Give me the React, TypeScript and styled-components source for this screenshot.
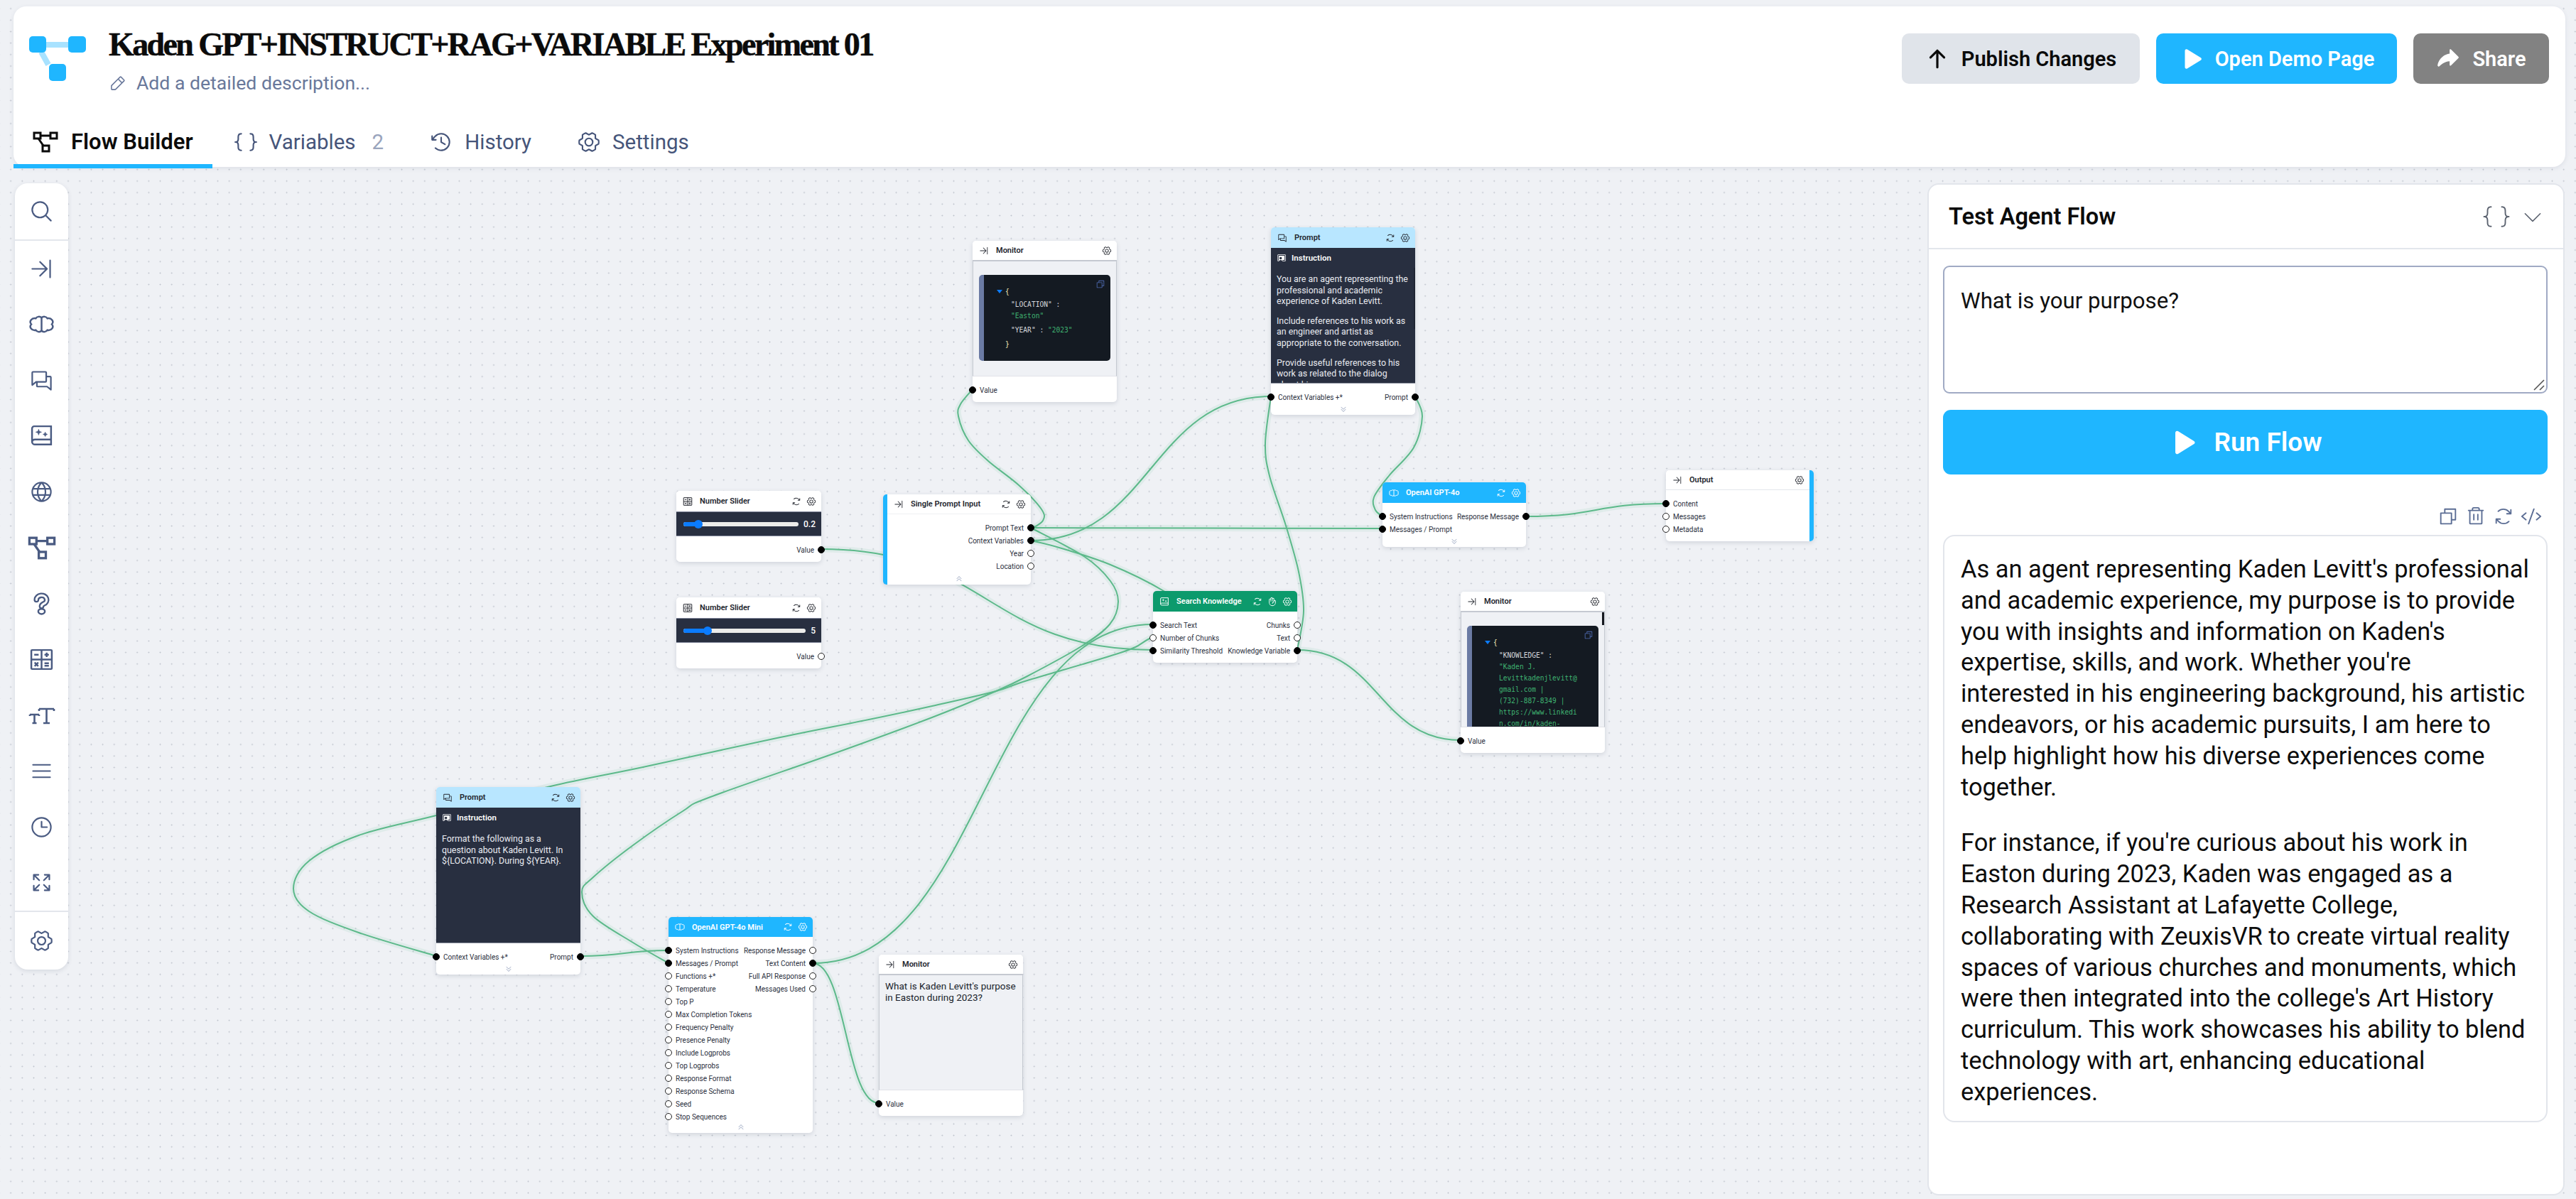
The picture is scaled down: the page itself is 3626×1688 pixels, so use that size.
import React from "react";
import styled, { createGlobalStyle } from "styled-components";
import {
  PiMagnifyingGlass, PiArrowLineRight, PiChats, PiGlobe, PiList, PiClock,
  PiArrowsOut, PiGearSix, PiArrowsClockwise, PiCopy, PiTrash, PiCode, PiBracketsCurly, PiBracketsCurlyLight,
  PiClockCounterClockwise, PiPencilSimple, PiCaretDownLight, PiCaretDoubleDown, PiCaretDoubleUp, PiPlayFill,
  PiShareFatFill, PiArrowUpBold, PiChalkboardTeacherFill, PiHandPalm,
} from "react-icons/pi";

const SANS = `Roboto, "Liberation Sans", sans-serif`;
const BLUE = "#1fb6ff";
const OX = 96;
const OY = 258;

const GlobalStyle = createGlobalStyle`
  html, body { margin: 0; padding: 0; }
  body {
    width: 3626px;
    height: 1688px;
    overflow: hidden;
    font-family: ${SANS};
    background-color: #eff1f5;
    background-image: radial-gradient(circle, #bcc1ca 0.8px, transparent 1.1px);
    background-size: 16.19px 16.19px;
    background-position: 7px 4px;
  }
`;

const Page = styled.div`
  display: flex;
  flex-direction: column;
  height: 1688px;
`;

const Header = styled.header`
  margin: 9px 15px 0 19px;
  height: 226px;
  background: #fff;
  border-radius: 18px;
  box-shadow: 0 2px 6px rgba(60, 70, 100, 0.1);
  display: flex;
  flex-direction: column;
`;

const HeaderTop = styled.div`
  flex: 1;
  display: flex;
  padding: 27px 23px 0 22px;
`;

const LogoMark = styled.svg`
  width: 80px;
  height: 63px;
  margin-top: 15px;
`;

const TitleBlock = styled.div`
  margin-left: 32px;
  flex: 1;
`;

const Title = styled.h1`
  margin: 0;
  font-family: "Liberation Serif", serif;
  font-size: 46px;
  line-height: 54px;
  font-weight: 700;
  letter-spacing: -2.62px;
  -webkit-text-stroke: 0.5px #0b0b0b;
  color: #0b0b0b;
`;

const Description = styled.div`
  margin-top: 10px;
  display: flex;
  align-items: center;
  gap: 14px;
  font-size: 26.6px;
  line-height: 34px;
  color: #69789b;
  svg { font-size: 25px; }
`;

const Actions = styled.div`
  display: flex;
  gap: 23px;
  margin-top: 11px;
`;

const ActionButton = styled.button<{ $bg: string; $fg: string; $w: number }>`
  width: ${(p) => p.$w}px;
  height: 71px;
  border: 0;
  border-radius: 10px;
  background: ${(p) => p.$bg};
  color: ${(p) => p.$fg};
  font-family: ${SANS};
  font-size: 29px;
  font-weight: 600;
  display: flex;
  align-items: center;
  justify-content: center;
  gap: 17px;
  svg { font-size: 34px; }
`;

const TabBar = styled.nav`
  display: flex;
  height: 64px;
  margin-bottom: -2px;
`;

const Tab = styled.div<{ $active?: boolean }>`
  display: flex;
  align-items: center;
  gap: ${(p) => (p.$active ? 18 : 16)}px;
  padding: 0 ${(p) => (p.$active ? "27px" : "34px")} 5px ${(p) => (p.$active ? "27px" : "30px")};
  font-size: ${(p) => (p.$active ? 31 : 29.5)}px;
  font-weight: ${(p) => (p.$active ? 600 : 400)};
  color: ${(p) => (p.$active ? "#0b0b0b" : "#46557a")};
  border-bottom: 6px solid ${(p) => (p.$active ? BLUE : "transparent")};
  svg { font-size: 34px; flex: none; }
`;

const TabCount = styled.span`
  margin-left: 7px;
  color: #9aa5bd;
`;

const Workspace = styled.main`
  flex: 1;
  display: flex;
  min-height: 0;
  padding: 23px 16px 5px 21px;
`;

const Sidebar = styled.aside`
  width: 75px;
  height: 1107px;
  background: #fff;
  border-radius: 18px;
  box-shadow: 0 2px 6px rgba(60, 70, 100, 0.14);
  display: flex;
  flex-direction: column;
  color: #4a5b82;
`;

const SideGroup = styled.div<{ $h: number; $line?: boolean }>`
  height: ${(p) => p.$h}px;
  display: flex;
  flex-direction: column;
  border-bottom: ${(p) => (p.$line ? "2px solid #e3e6ec" : "0")};
`;

const SideIcon = styled.div`
  flex: 1;
  display: flex;
  align-items: center;
  justify-content: center;
  font-size: 35px;
`;

const Canvas = styled.section`
  flex: 1;
  position: relative;
  min-width: 0;
`;

const EdgeLayer = styled.svg`
  position: absolute;
  left: 0;
  top: 0;
  width: 2617px;
  height: 1430px;
  overflow: visible;
`;

const EdgeHalo = styled.path`
  fill: none;
  stroke: rgba(88, 184, 136, 0.1);
  stroke-width: 9;
`;

const EdgeLine = styled.path`
  fill: none;
  stroke: #5cb98a;
  stroke-width: 2;
`;

const NodeCard = styled.div<{ $x: number; $y: number; $w: number; $h: number; $side?: "left" | "right" }>`
  position: absolute;
  left: ${(p) => p.$x - OX}px;
  top: ${(p) => p.$y - OY}px;
  width: ${(p) => p.$w}px;
  height: ${(p) => p.$h}px;
  box-sizing: border-box;
  background: #fff;
  border-radius: 5px;
  box-shadow: 0 2px 6px rgba(50, 60, 90, 0.16);
  display: flex;
  flex-direction: column;
  border-left: ${(p) => (p.$side === "left" ? `6px solid ${BLUE}` : "0")};
  border-right: ${(p) => (p.$side === "right" ? `6px solid ${BLUE}` : "0")};
`;

const NodeHead = styled.div<{ $bg?: string; $fg?: string; $h?: number; $line?: string }>`
  flex: none;
  height: ${(p) => p.$h ?? 29}px;
  box-sizing: border-box;
  display: flex;
  align-items: center;
  gap: 7px;
  padding: 0 7px 0 9px;
  background: ${(p) => p.$bg ?? "#fff"};
  color: ${(p) => p.$fg ?? "#23262e"};
  border-radius: 5px 5px 0 0;
  border-bottom: ${(p) => (p.$line ? `1px solid ${p.$line}` : "0")};
  font-size: 11px;
  font-weight: 600;
  svg { font-size: 14px; flex: none; }
`;

const HeadTitle = styled.span`
  flex: 1;
  margin-left: 3px;
  white-space: nowrap;
`;

const NodeRows = styled.div`
  padding-top: 10px;
`;

const Row = styled.div`
  position: relative;
  height: 18px;
  padding: 0 10px;
  display: flex;
  align-items: center;
  justify-content: space-between;
  font-size: 10px;
  color: #2b3040;
  white-space: nowrap;
`;

const Handle = styled.i<{ $side: "left" | "right"; $on?: boolean }>`
  position: absolute;
  top: 50%;
  ${(p) => p.$side}: -5px;
  width: 10px;
  height: 10px;
  margin-top: -5px;
  box-sizing: border-box;
  border-radius: 50%;
  border: 1.5px solid ${(p) => (p.$on ? "#000" : "#222")};
  background: ${(p) => (p.$on ? "#000" : "#fff")};
`;

const Chevron = styled.div`
  margin-top: auto;
  height: 13px;
  display: flex;
  justify-content: center;
  color: #98a4bf;
  font-size: 10px;
  line-height: 10px;
`;

const DarkBlock = styled.div<{ $h: number }>`
  position: relative;
  flex: none;
  height: ${(p) => p.$h}px;
  overflow: hidden;
  background: #282f40;
  color: #e9ebf0;
  padding: 6px 8px 0;
  box-sizing: border-box;
  border-bottom: 1px solid #8c92a0;
`;

const InstructionHead = styled.div`
  display: flex;
  align-items: center;
  gap: 7px;
  height: 16px;
  font-size: 11.5px;
  font-weight: 600;
  color: #fff;
  margin-bottom: 14px;
  svg { font-size: 14px; }
`;

const Para = styled.p`
  margin: 0 0 12px;
  font-size: 12.4px;
  line-height: 15.6px;
`;

const ScrollThumb = styled.div`
  position: absolute;
  right: 0;
  top: 28px;
  width: 2px;
  height: 86px;
  background: #1f2533;
`;

const SliderBlock = styled.div`
  flex: none;
  height: 35px;
  box-sizing: border-box;
  background: #282f40;
  border-top: 1px solid #80869a;
  border-bottom: 1px solid #80869a;
  display: flex;
  align-items: center;
  padding: 0 8px 0 10px;
  gap: 7px;
  color: #fff;
  font-size: 12px;
  font-weight: 500;
`;

const SliderTrack = styled.div`
  position: relative;
  flex: 1;
  height: 6px;
  border-radius: 3px;
  background: #ececea;
`;

const SliderFill = styled.div`
  height: 100%;
  border-radius: 3px;
  background: #0b7cff;
  position: relative;
  &::after {
    content: "";
    position: absolute;
    right: -6px;
    top: -3px;
    width: 12px;
    height: 12px;
    border-radius: 50%;
    background: #0b7cff;
  }
`;

const MonitorMiddle = styled.div`
  position: relative;
  flex: 1;
  min-height: 0;
  overflow: hidden;
  background: #eff1f5;
  box-sizing: border-box;
  border: 1px solid #c5c9d1;
  border-bottom-color: #e1e3e8;
  padding: 19px 8px 0;
  font-size: 13.5px;
  line-height: 15.6px;
  color: #1a1f2c;
`;

const PlainText = styled.div`
  margin-top: -11px;
`;

const MonitorFoot = styled.div`
  flex: none;
  height: 36px;
  padding-top: 10px;
  box-sizing: border-box;
`;

const CodeBox = styled.div`
  position: relative;
  min-height: 121px;
  box-sizing: border-box;
  padding: 16px 0 0 30px;
  background: #141a22;
  border-left: 7px solid #6b7ba4;
  border-radius: 5px;
  font-family: "DejaVu Sans Mono", monospace;
  font-size: 9.6px;
  line-height: 16px;
  color: #f2e8b8;
`;

const Caret = styled.span`
  position: absolute;
  left: 18px;
  top: 21px;
  border-left: 4px solid transparent;
  border-right: 4px solid transparent;
  border-top: 5px solid #0b7cff;
`;

const CopyIcon = styled.span`
  position: absolute;
  right: 7px;
  top: 6px;
  font-size: 14px;
  color: #4d6ab0;
`;

const JsonKey = styled.div<{ $gap?: number }>`
  margin-left: 8px;
  margin-top: ${(p) => p.$gap ?? 0}px;
  color: #d7d9dd;
  white-space: nowrap;
`;

const JsonValue = styled.span`
  color: #3fb371;
`;

const JsonLine = styled.div`
  margin-left: 8px;
  color: #3fb371;
  white-space: nowrap;
`;

const JsonClose = styled.div`
  margin-top: 4px;
`;

const BottomThumb = styled.div`
  position: absolute;
  right: 0;
  top: 0;
  width: 3px;
  height: 18px;
  background: #15181f;
`;

const Panel = styled.aside`
  width: 897px;
  height: 1425px;
  flex: none;
  box-sizing: border-box;
  background: #fff;
  border: 2px solid #e2e5eb;
  border-radius: 16px;
  display: flex;
  flex-direction: column;
`;

const PanelHead = styled.div`
  flex: none;
  height: 91px;
  box-sizing: border-box;
  border-bottom: 2px solid #e3e6ec;
  padding: 0 26px 0 28px;
  display: flex;
  align-items: center;
  gap: 14px;
  color: #5c6370;
`;

const PanelTitle = styled.div`
  flex: 1;
  color: #0b0b0b;
  font-size: 32.5px;
  font-weight: 600;
`;

const PanelBody = styled.div`
  padding: 23px 22px 0 20px;
  display: flex;
  flex-direction: column;
`;

const PromptWrap = styled.div`
  position: relative;
  height: 180px;
`;

const PromptBox = styled.textarea`
  width: 100%;
  height: 100%;
  box-sizing: border-box;
  resize: none;
  outline: none;
  border: 2px solid #a0aac4;
  border-radius: 9px;
  padding: 28px 23px;
  font-family: ${SANS};
  font-size: 31.2px;
  line-height: 40px;
  color: #111;
`;

const Grip = styled.svg`
  position: absolute;
  right: 3px;
  bottom: 3px;
  width: 18px;
  height: 18px;
`;

const RunButton = styled.button`
  margin-top: 23px;
  height: 91px;
  border: 0;
  border-radius: 11px;
  background: ${BLUE};
  color: #fff;
  font-family: ${SANS};
  font-size: 37px;
  font-weight: 600;
  display: flex;
  align-items: center;
  justify-content: center;
  gap: 24px;
  svg { font-size: 40px; }
`;

const ResultTools = styled.div`
  margin-top: 44px;
  height: 30px;
  display: flex;
  justify-content: flex-end;
  gap: 9px;
  padding-right: 8px;
  color: #5b6d94;
  font-size: 30px;
  svg { display: block; }
`;

const ResultBox = styled.div`
  margin-top: 11px;
  height: 827px;
  box-sizing: border-box;
  border: 2px solid #e2e5eb;
  border-radius: 16px;
  padding: 25px 22px 0 23px;
  color: #0d0d0d;
  font-size: 34.4px;
  line-height: 43.8px;
`;

const ResultPara = styled.p`
  margin: 0 0 35px;
`;

const smooth = (pts: number[][]) => {
  let d = `M${pts[0][0]} ${pts[0][1]}`;
  for (let i = 0; i < pts.length - 1; i++) {
    const a = pts[i - 1] || pts[i];
    const b = pts[i];
    const c = pts[i + 1];
    const e = pts[i + 2] || c;
    d += ` C${b[0] + (c[0] - a[0]) / 6} ${b[1] + (c[1] - a[1]) / 6} ${c[0] - (e[0] - b[0]) / 6} ${c[1] - (e[1] - b[1]) / 6} ${c[0]} ${c[1]}`;
  }
  return d;
};

const bez = (x0: number, y0: number, x1: number, y1: number) => {
  const m = (x0 + x1) / 2;
  return `M${x0} ${y0} C${m} ${y0} ${m} ${y1} ${x1} ${y1}`;
};

const edges = [
  bez(1156, 773, 1623, 915),
  bez(1451, 743, 1946, 744),
  bez(1451, 761, 1789, 558),
  bez(1144, 1356, 1623, 879),
  bez(1826, 915, 2056, 1042),
  bez(2148, 727, 2345, 709),
  bez(817, 1346, 941, 1338),
  bez(1144, 1356, 1237, 1553),
  smooth([[1369, 548], [1352, 569], [1349, 586], [1363, 620], [1391, 649], [1434, 683], [1466, 717], [1468, 733], [1451, 745]]),
  smooth([[1992, 558], [2002, 586], [1990, 630], [1955, 670], [1934, 700], [1936, 718], [1946, 727]]),
  smooth([[1789, 558], [1781, 624], [1787, 670], [1810, 740], [1828, 805], [1835, 860], [1826, 915]]),
  smooth([[1451, 743], [1527, 784], [1563, 818], [1574, 847], [1562, 879], [1522, 910], [1446, 952], [1402, 973], [1312, 1010], [1179, 1059], [1000, 1122], [961, 1142], [891, 1190], [835, 1235], [819, 1256], [835, 1290], [891, 1327], [941, 1356]]),
  smooth([[1451, 761], [1491, 771], [1563, 795], [1638, 832], [1680, 865], [1618, 899], [1580, 918], [1446, 958], [1402, 973], [1312, 994], [1223, 1013], [1089, 1040], [905, 1080], [775, 1107], [614, 1148], [505, 1176], [435, 1212], [413, 1251], [435, 1283], [505, 1313], [614, 1346]]),
];

const FlowIcon = ({ w = 36, h = 30 }: { w?: number; h?: number }) => (
  <svg width={w} height={h} viewBox="0 0 36 30" fill="none" stroke="currentColor" strokeWidth="3">
    <rect x="2" y="2" width="9" height="8" />
    <rect x="25" y="2" width="9" height="8" />
    <rect x="14" y="20" width="9" height="8" />
    <path d="M11 6h14M8 10l7 10" />
  </svg>
);

const BrainIcon = ({ size = 35 }: { size?: number }) => (
  <svg width={size} height={size} viewBox="0 0 34 34" fill="none" stroke="currentColor" strokeWidth="2.4">
    <path d="M17 7v20" />
    <path d="M17 8a5 4.500 0 0 0-8 1a6 5 0 0 0-6 8a6 5 0 0 0 6 8a5 4.500 0 0 0 8 1" />
    <path d="M17 8a5 4.500 0 0 1 8 1a6 5 0 0 1 6 8a6 5 0 0 1-6 8a5 4.500 0 0 1-8 1" />
  </svg>
);

const BookSpark = ({ size = 35 }: { size?: number }) => (
  <svg width={size} height={size} viewBox="0 0 34 34" fill="none" stroke="currentColor" strokeWidth="2.4">
    <path d="M4 26V7a3 3 0 0 1 3-3h23v25H8a4 4 0 0 1-4-4 4 4 0 0 1 4-3h22" />
    <path d="M13 8l1 3 3 1-3 1-1 3-1-3-3-1 3-1zM22 12l1 2 2 1-2 1-1 2-1-2-2-1 2-1z" fill="currentColor" strokeWidth="0.6" />
  </svg>
);

const CalcIcon = ({ size = 35 }: { size?: number }) => (
  <svg width={size} height={size} viewBox="0 0 34 34" fill="none" stroke="currentColor" strokeWidth="2.4">
    <rect x="3" y="4" width="28" height="26" rx="1" />
    <path d="M17 4v26M3 17h28M7 10.500h6M21 10.500h6M24 7.500v6M7.500 21l5 5M12.500 21l-5 5M21 22h6M21 25.500h6" />
  </svg>
);

const TextSize = () => (
  <svg width="40" height="35" viewBox="0 0 38 35" fill="none" stroke="currentColor" strokeWidth="2.6">
    <path d="M15 8h21M25.500 8v20M21 28h9M2 16h13M8.500 16v12M5.500 28h6" />
    <path d="M15 8v3M36 8v3M2 16v2M15 16v2" />
  </svg>
);

const QuestionOutline = () => (
  <svg width="35" height="35" viewBox="0 0 34 34" fill="none" strokeLinecap="round">
    <path d="M10 12a7 6 0 1 1 10 5.500c-2 1-3 1.500-3 3.500" stroke="currentColor" strokeWidth="7.500" />
    <path d="M10 12a7 6 0 1 1 10 5.500c-2 1-3 1.500-3 3.500" stroke="#fff" strokeWidth="3" />
    <ellipse cx="17" cy="28" rx="4.500" ry="3.500" stroke="currentColor" strokeWidth="2.400" fill="#fff" />
  </svg>
);

const SliderIcon = () => <CalcIcon size={14} />;

const Logo = () => (
  <LogoMark viewBox="0 0 80 63">
    <path d="M20 12h40M17 22l10 18" stroke="#a8e2ff" strokeWidth="8" fill="none" />
    <rect x="0" y="0" width="24" height="23" rx="5" fill={BLUE} />
    <rect x="55" y="0" width="25" height="23" rx="5" fill={BLUE} />
    <rect x="28" y="39" width="24" height="24" rx="5" fill={BLUE} />
  </LogoMark>
);

type Port = { t: string; on?: boolean };

const PortRow = ({ l, r }: { l?: Port; r?: Port }) => (
  <Row>
    {l ? <Handle $side="left" $on={l.on} /> : null}
    <span>{l ? l.t : ""}</span>
    <span>{r ? r.t : ""}</span>
    {r ? <Handle $side="right" $on={r.on} /> : null}
  </Row>
);

const MonitorNode = ({ x, y, h, children }: { x: number; y: number; h: number; children: React.ReactNode }) => (
  <NodeCard $x={x} $y={y} $w={203} $h={h}>
    <NodeHead $h={28} $line="#c5c9d1">
      <PiArrowLineRight />
      <HeadTitle>Monitor</HeadTitle>
      <PiGearSix />
    </NodeHead>
    <MonitorMiddle>{children}</MonitorMiddle>
    <MonitorFoot>
      <PortRow l={{ t: "Value", on: true }} />
    </MonitorFoot>
  </NodeCard>
);

const PromptNode = ({ x, y, h, bodyH, children }: { x: number; y: number; h: number; bodyH: number; children: React.ReactNode }) => (
  <NodeCard $x={x} $y={y} $w={203} $h={h}>
    <NodeHead $bg="#b8e6ff">
      <PiChats />
      <HeadTitle>Prompt</HeadTitle>
      <PiArrowsClockwise />
      <PiGearSix />
    </NodeHead>
    <DarkBlock $h={bodyH}>
      <InstructionHead>
        <PiChalkboardTeacherFill />
        Instruction
      </InstructionHead>
      {children}
    </DarkBlock>
    <NodeRows>
      <PortRow l={{ t: "Context Variables +*", on: true }} r={{ t: "Prompt", on: true }} />
    </NodeRows>
    <Chevron>
      <PiCaretDoubleDown />
    </Chevron>
  </NodeCard>
);

const SliderNode = ({ y, value, pct, on }: { y: number; value: string; pct: number; on?: boolean }) => (
  <NodeCard $x={952} $y={y} $w={204} $h={100}>
    <NodeHead>
      <SliderIcon />
      <HeadTitle>Number Slider</HeadTitle>
      <PiArrowsClockwise />
      <PiGearSix />
    </NodeHead>
    <SliderBlock>
      <SliderTrack>
        <SliderFill style={{ width: `${pct}%` }} />
      </SliderTrack>
      {value}
    </SliderBlock>
    <NodeRows>
      <PortRow r={{ t: "Value", on }} />
    </NodeRows>
  </NodeCard>
);

const miniLeft = ["Functions +*", "Temperature", "Top P", "Max Completion Tokens", "Frequency Penalty", "Presence Penalty", "Include Logprobs", "Top Logprobs", "Response Format", "Response Schema", "Seed", "Stop Sequences"];
const miniRight: Record<number, string> = { 0: "Full API Response", 1: "Messages Used" };

const knowledgeLines = ['"Kaden J.', "Levittkadenjlevitt@", "gmail.com |", "(732)-887-8349 |", "https://www.linkedi", "n.com/in/kaden-"];

export default function App() {
  return (
    <Page>
      <GlobalStyle />
      <Header>
        <HeaderTop>
          <Logo />
          <TitleBlock>
            <Title>Kaden GPT+INSTRUCT+RAG+VARIABLE Experiment 01</Title>
            <Description>
              <PiPencilSimple />
              Add a detailed description...
            </Description>
          </TitleBlock>
          <Actions>
            <ActionButton $bg="#e0e4ea" $fg="#0b0b0b" $w={335}>
              <PiArrowUpBold />
              Publish Changes
            </ActionButton>
            <ActionButton $bg={BLUE} $fg="#fff" $w={339}>
              <PiPlayFill />
              Open Demo Page
            </ActionButton>
            <ActionButton $bg="#828282" $fg="#fff" $w={191}>
              <PiShareFatFill />
              Share
            </ActionButton>
          </Actions>
        </HeaderTop>
        <TabBar>
          <Tab $active>
            <FlowIcon />
            Flow Builder
          </Tab>
          <Tab>
            <PiBracketsCurly />
            Variables
            <TabCount>2</TabCount>
          </Tab>
          <Tab>
            <PiClockCounterClockwise />
            History
          </Tab>
          <Tab>
            <PiGearSix />
            Settings
          </Tab>
        </TabBar>
      </Header>

      <Workspace>
        <Sidebar>
          <SideGroup $h={79} $line>
            <SideIcon><PiMagnifyingGlass /></SideIcon>
          </SideGroup>
          <SideGroup $h={947} $line>
            <SideIcon><PiArrowLineRight /></SideIcon>
            <SideIcon><BrainIcon /></SideIcon>
            <SideIcon><PiChats /></SideIcon>
            <SideIcon><BookSpark /></SideIcon>
            <SideIcon><PiGlobe /></SideIcon>
            <SideIcon><FlowIcon w={40} h={33} /></SideIcon>
            <SideIcon><QuestionOutline /></SideIcon>
            <SideIcon><CalcIcon /></SideIcon>
            <SideIcon><TextSize /></SideIcon>
            <SideIcon><PiList /></SideIcon>
            <SideIcon><PiClock /></SideIcon>
            <SideIcon><PiArrowsOut /></SideIcon>
          </SideGroup>
          <SideGroup $h={81}>
            <SideIcon><PiGearSix /></SideIcon>
          </SideGroup>
        </Sidebar>

        <Canvas>
          <EdgeLayer viewBox={`${OX} ${OY} 2617 1430`}>
            {edges.map((d, i) => (
              <EdgeHalo key={i} d={d} />
            ))}
            {edges.map((d, i) => (
              <EdgeLine key={i} d={d} />
            ))}
          </EdgeLayer>

          <MonitorNode x={1369} y={339} h={227}>
            <CodeBox>
              <Caret />
              {"{"}
              <JsonKey $gap={2}>"LOCATION" :</JsonKey>
              <JsonLine>"Easton"</JsonLine>
              <JsonKey $gap={4}>
                "YEAR" : <JsonValue>"2023"</JsonValue>
              </JsonKey>
              <JsonClose>{"}"}</JsonClose>
              <CopyIcon><PiCopy /></CopyIcon>
            </CodeBox>
          </MonitorNode>

          <PromptNode x={1789} y={320} h={264} bodyH={191}>
            <Para>You are an agent representing the professional and academic experience of Kaden Levitt.</Para>
            <Para>Include references to his work as an engineer and artist as appropriate to the conversation.</Para>
            <Para>Provide useful references to his work as related to the dialog about his</Para>
            <ScrollThumb />
          </PromptNode>

          <SliderNode y={691} value="0.2" pct={13} on />
          <SliderNode y={841} value="5" pct={20} />

          <NodeCard $x={1243} $y={696} $w={208} $h={127} $side="left">
            <NodeHead $h={28} $line="#eef0f3">
              <PiArrowLineRight />
              <HeadTitle>Single Prompt Input</HeadTitle>
              <PiArrowsClockwise />
              <PiGearSix />
            </NodeHead>
            <NodeRows>
              <PortRow r={{ t: "Prompt Text", on: true }} />
              <PortRow r={{ t: "Context Variables", on: true }} />
              <PortRow r={{ t: "Year" }} />
              <PortRow r={{ t: "Location" }} />
            </NodeRows>
            <Chevron>
              <PiCaretDoubleUp />
            </Chevron>
          </NodeCard>

          <NodeCard $x={1623} $y={832} $w={203} $h={101}>
            <NodeHead $bg="#0c9a6c" $fg="#fff">
              <BookSpark size={14} />
              <HeadTitle>Search Knowledge</HeadTitle>
              <PiArrowsClockwise />
              <PiHandPalm />
              <PiGearSix />
            </NodeHead>
            <NodeRows>
              <PortRow l={{ t: "Search Text", on: true }} r={{ t: "Chunks" }} />
              <PortRow l={{ t: "Number of Chunks" }} r={{ t: "Text" }} />
              <PortRow l={{ t: "Similarity Threshold", on: true }} r={{ t: "Knowledge Variable", on: true }} />
            </NodeRows>
          </NodeCard>

          <NodeCard $x={1946} $y={679} $w={202} $h={91}>
            <NodeHead $bg={BLUE} $fg="#fff">
              <BrainIcon size={14} />
              <HeadTitle>OpenAI GPT-4o</HeadTitle>
              <PiArrowsClockwise />
              <PiGearSix />
            </NodeHead>
            <NodeRows>
              <PortRow l={{ t: "System Instructions", on: true }} r={{ t: "Response Message", on: true }} />
              <PortRow l={{ t: "Messages / Prompt", on: true }} />
            </NodeRows>
            <Chevron>
              <PiCaretDoubleDown />
            </Chevron>
          </NodeCard>

          <NodeCard $x={2345} $y={662} $w={208} $h={100} $side="right">
            <NodeHead $h={28} $line="#e3e6ec">
              <PiArrowLineRight />
              <HeadTitle>Output</HeadTitle>
              <PiGearSix />
            </NodeHead>
            <NodeRows>
              <PortRow l={{ t: "Content", on: true }} />
              <PortRow l={{ t: "Messages" }} />
              <PortRow l={{ t: "Metadata" }} />
            </NodeRows>
          </NodeCard>

          <MonitorNode x={2056} y={833} h={227}>
            <BottomThumb />
            <CodeBox>
              <Caret />
              {"{"}
              <JsonKey $gap={2}>"KNOWLEDGE" :</JsonKey>
              {knowledgeLines.map((line) => (
                <JsonLine key={line}>{line}</JsonLine>
              ))}
              <CopyIcon><PiCopy /></CopyIcon>
            </CodeBox>
          </MonitorNode>

          <PromptNode x={614} y={1108} h={264} bodyH={191}>
            <Para>Format the following as a question about Kaden Levitt. In {"${LOCATION}"}. During {"${YEAR}"}.</Para>
          </PromptNode>

          <NodeCard $x={941} $y={1291} $w={203} $h={304}>
            <NodeHead $bg={BLUE} $fg="#fff" $h={28}>
              <BrainIcon size={14} />
              <HeadTitle>OpenAI GPT-4o Mini</HeadTitle>
              <PiArrowsClockwise />
              <PiGearSix />
            </NodeHead>
            <NodeRows>
              <PortRow l={{ t: "System Instructions", on: true }} r={{ t: "Response Message" }} />
              <PortRow l={{ t: "Messages / Prompt", on: true }} r={{ t: "Text Content", on: true }} />
              {miniLeft.map((t, i) => (
                <PortRow key={t} l={{ t }} r={miniRight[i] ? { t: miniRight[i] } : undefined} />
              ))}
            </NodeRows>
            <Chevron>
              <PiCaretDoubleUp />
            </Chevron>
          </NodeCard>

          <MonitorNode x={1237} y={1344} h={227}>
            <PlainText>What is Kaden Levitt's purpose in Easton during 2023?</PlainText>
          </MonitorNode>
        </Canvas>

        <Panel>
          <PanelHead>
            <PanelTitle>Test Agent Flow</PanelTitle>
            <PiBracketsCurlyLight size={40} />
            <PiCaretDownLight size={34} />
          </PanelHead>
          <PanelBody>
            <PromptWrap>
              <PromptBox defaultValue="What is your purpose?" />
              <Grip viewBox="0 0 18 18" stroke="#555" strokeWidth="1.6">
                <path d="M2 16L16 2M10 16l6-6" />
              </Grip>
            </PromptWrap>
            <RunButton>
              <PiPlayFill />
              Run Flow
            </RunButton>
            <ResultTools>
              <PiCopy />
              <PiTrash />
              <PiArrowsClockwise />
              <PiCode />
            </ResultTools>
            <ResultBox>
              <ResultPara>
                As an agent representing Kaden Levitt's professional and academic experience, my purpose is to provide
                you with insights and information on Kaden's expertise, skills, and work. Whether you're
                <br />
                interested in his engineering background, his artistic endeavors, or his academic pursuits, I am here to
                help highlight how his diverse experiences come together.
              </ResultPara>
              <ResultPara>
                For instance, if you're curious about his work in Easton during 2023, Kaden was engaged as a Research
                Assistant at Lafayette College, collaborating with ZeuxisVR to create virtual reality spaces of various
                churches and monuments, which were then integrated into the college's Art History curriculum. This work
                showcases his ability to blend technology with art, enhancing educational experiences.
              </ResultPara>
            </ResultBox>
          </PanelBody>
        </Panel>
      </Workspace>
    </Page>
  );
}
